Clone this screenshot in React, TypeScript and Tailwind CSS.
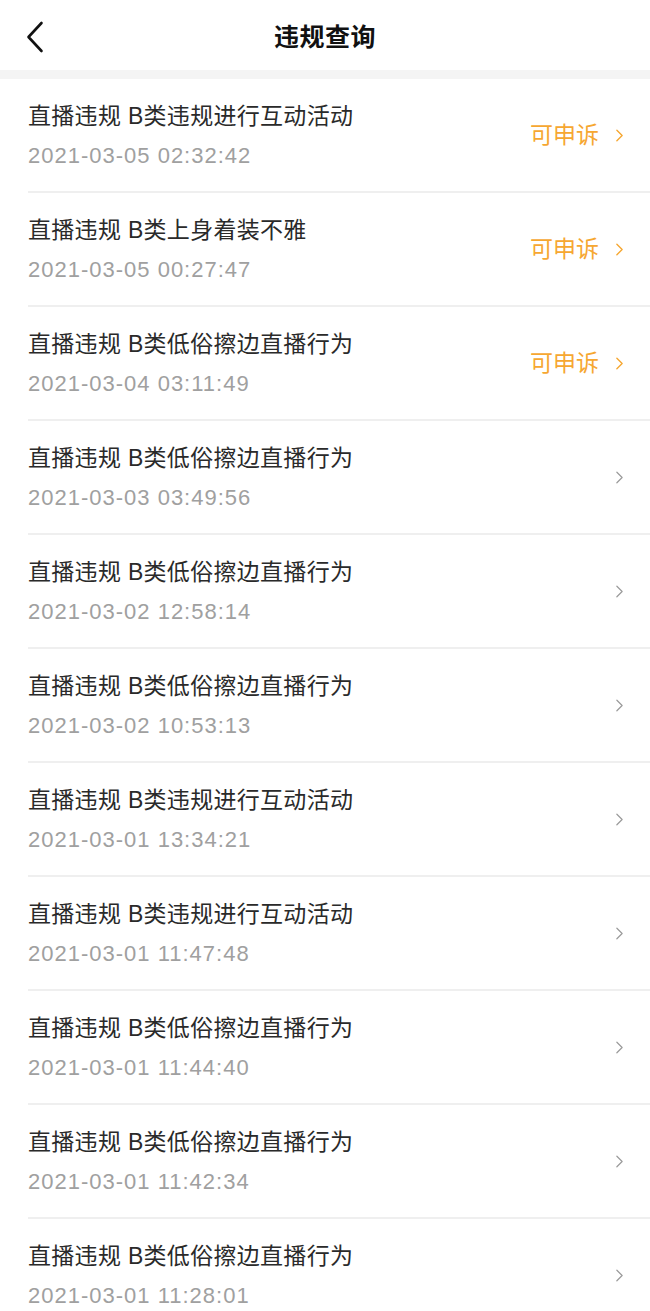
import { ChevronRight } from 'lucide-react';

type Record = {
  title: string;
  time: string;
  appeal: boolean;
};

const records: Record[] = [
  { title: '直播违规 B类违规进行互动活动', time: '2021-03-05 02:32:42', appeal: true },
  { title: '直播违规 B类上身着装不雅', time: '2021-03-05 00:27:47', appeal: true },
  { title: '直播违规 B类低俗擦边直播行为', time: '2021-03-04 03:11:49', appeal: true },
  { title: '直播违规 B类低俗擦边直播行为', time: '2021-03-03 03:49:56', appeal: false },
  { title: '直播违规 B类低俗擦边直播行为', time: '2021-03-02 12:58:14', appeal: false },
  { title: '直播违规 B类低俗擦边直播行为', time: '2021-03-02 10:53:13', appeal: false },
  { title: '直播违规 B类违规进行互动活动', time: '2021-03-01 13:34:21', appeal: false },
  { title: '直播违规 B类违规进行互动活动', time: '2021-03-01 11:47:48', appeal: false },
  { title: '直播违规 B类低俗擦边直播行为', time: '2021-03-01 11:44:40', appeal: false },
  { title: '直播违规 B类低俗擦边直播行为', time: '2021-03-01 11:42:34', appeal: false },
  { title: '直播违规 B类低俗擦边直播行为', time: '2021-03-01 11:28:01', appeal: false },
];

const font = "font-['Liberation_Sans','Noto_Sans_CJK_SC',sans-serif]";

function BackArrow() {
  return (
    <svg width="18" height="32" viewBox="0 0 18 32" fill="none">
      <path
        d="M15.5 2 L2.5 16 L15.5 30"
        stroke="#111"
        strokeWidth="2.6"
        strokeLinecap="round"
        strokeLinejoin="round"
      />
    </svg>
  );
}

function Row({ item }: { item: Record }) {
  return (
    <div className="pl-[28px]">
      <div className="flex items-center h-[114px] border-b-[2px] border-[#efefef] pr-[20px]">
        <div className="flex-1">
          <div className="text-[23px] leading-[30px] text-[#2a2a2a] tracking-[0.3px]">{item.title}</div>
          <div className="mt-[12px] text-[22px] leading-[26px] text-[#a0a0a0] tracking-[1px]">{item.time}</div>
        </div>
        {item.appeal ? (
          <div className="flex items-center text-[#f6a731]">
            <span className="text-[23px] leading-[30px]">可申诉</span>
            <ChevronRight size={21} strokeWidth={1.6} className="ml-[10px]" />
          </div>
        ) : (
          <ChevronRight size={21} strokeWidth={1.4} className="text-[#9a9a9a]" />
        )}
      </div>
    </div>
  );
}

export default function App() {
  return (
    <div className={`w-[650px] h-[1311px] overflow-hidden bg-white ${font}`}>
      <div className="relative flex items-center justify-center h-[70px] pt-[5px]">
        <div className="absolute left-[26px] top-[21px]">
          <BackArrow />
        </div>
        <div className="text-[25px] font-bold text-[#111] tracking-[0.5px]">违规查询</div>
      </div>
      <div className="h-[9px] bg-[#f4f4f4]" />
      {records.map((item, i) => (
        <Row key={i} item={item} />
      ))}
    </div>
  );
}
